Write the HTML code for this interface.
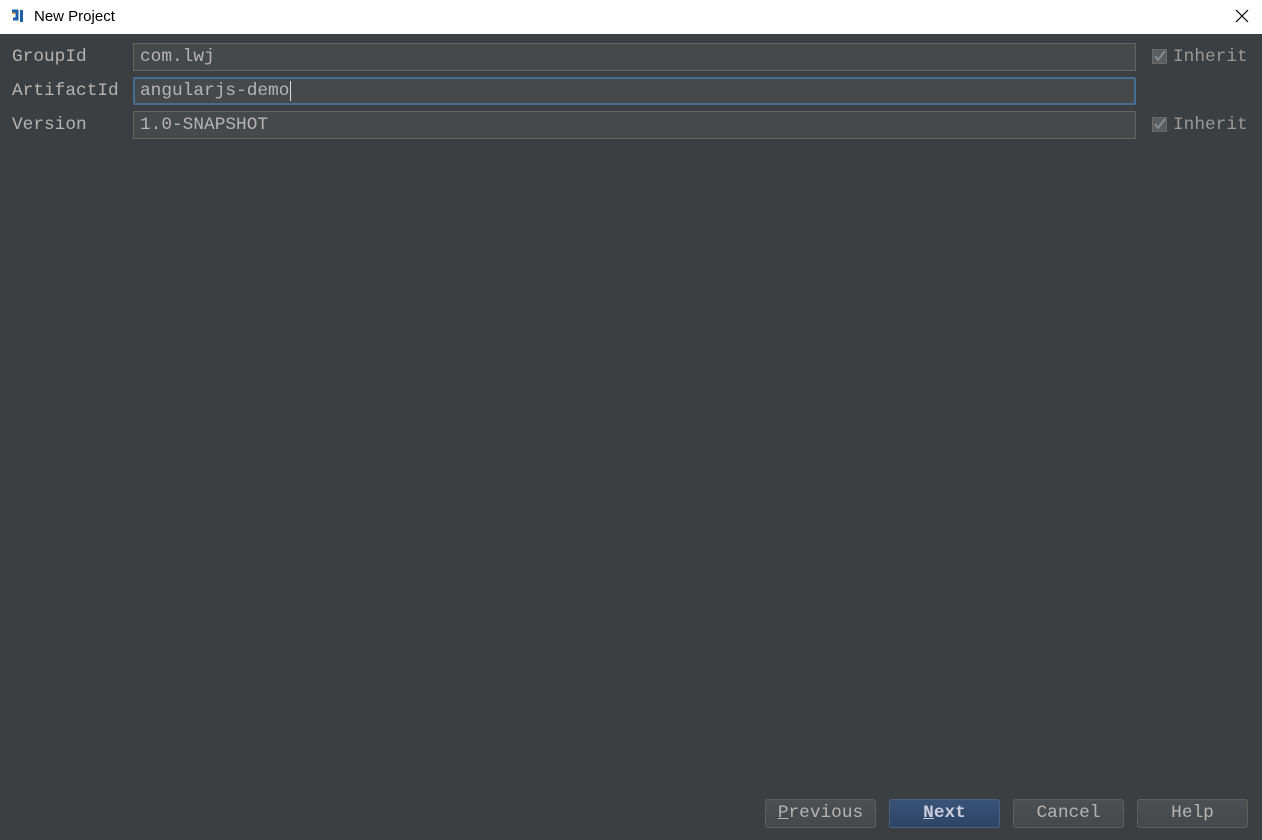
<!DOCTYPE html>
<html><head><meta charset="utf-8"><style>
body{margin:0;width:1262px;height:840px;background:#3c3f41;font-family:"Liberation Mono",monospace;font-size:17.8px;color:#b4b4b4;position:relative;overflow:hidden}
.title{position:absolute;left:0;top:0;width:1262px;height:34px;background:#fff;font-family:"Liberation Sans",sans-serif;font-size:15px;color:#000}
.title span{position:absolute;left:34px;top:8px}
.lbl{position:absolute;left:12px;line-height:20px}
.fld{position:absolute;left:133px;background:#45494a;border:1px solid #646464;line-height:26px;padding-left:6px;box-sizing:border-box;width:1003px;height:28px}
.foc{border:2px solid #466d94;border-radius:2px;padding-left:5px;line-height:24px}
.chk{position:absolute;left:1152px;width:13px;height:13px;background:#5a5d5f;border:1px solid #6b6b6b}
.inh{position:absolute;left:1173px;color:#999}
.btn{position:absolute;top:799px;width:111px;height:29px;box-sizing:border-box;border:1px solid #5e6060;border-radius:3px;background:linear-gradient(#4c5052,#46494b);text-align:center;line-height:27px;color:#b4b4b4}
</style></head><body>
<div class="title">
<svg style="position:absolute;left:11px;top:8px" width="16" height="16" viewBox="0 0 16 16"><rect x="1" y="2" width="4" height="4" fill="#f0a030"/><path d="M1 3h5v8h-4" stroke="#1d5fa8" stroke-width="3" fill="none"/><rect x="9" y="2" width="3" height="12" fill="#1d5fa8"/></svg>
<span>New Project</span>
<svg style="position:absolute;left:1235px;top:9px" width="14" height="14"><path d="M1 1L13 13M13 1L1 13" stroke="#000" stroke-width="1.2"/></svg>
</div>
<div class="lbl" style="top:47px">GroupId</div>
<div class="fld" style="top:43px">com.lwj</div>
<div class="chk" style="top:49px"><svg width="13" height="13" style="display:block"><path d="M2 6l3 4l7-9" stroke="#8a8d8f" stroke-width="2" fill="none"/></svg></div><div class="inh" style="top:47px">Inherit</div>
<div class="lbl" style="top:81px">ArtifactId</div>
<div class="fld foc" style="top:77px">angularjs-demo<span style="border-left:1px solid #ddd;margin-left:1px"></span></div>
<div class="lbl" style="top:115px">Version</div>
<div class="fld" style="top:111px">1.0-SNAPSHOT</div>
<div class="chk" style="top:117px"><svg width="13" height="13" style="display:block"><path d="M2 6l3 4l7-9" stroke="#8a8d8f" stroke-width="2" fill="none"/></svg></div><div class="inh" style="top:115px">Inherit</div>
<div class="btn" style="left:765px"><u>P</u>revious</div>
<div class="btn" style="left:889px;background:linear-gradient(#385377,#2d4566);border-color:#4a6282;color:#ccd;font-weight:bold"><u>N</u>ext</div>
<div class="btn" style="left:1013px">Cancel</div>
<div class="btn" style="left:1137px">Help</div>
</body></html>
